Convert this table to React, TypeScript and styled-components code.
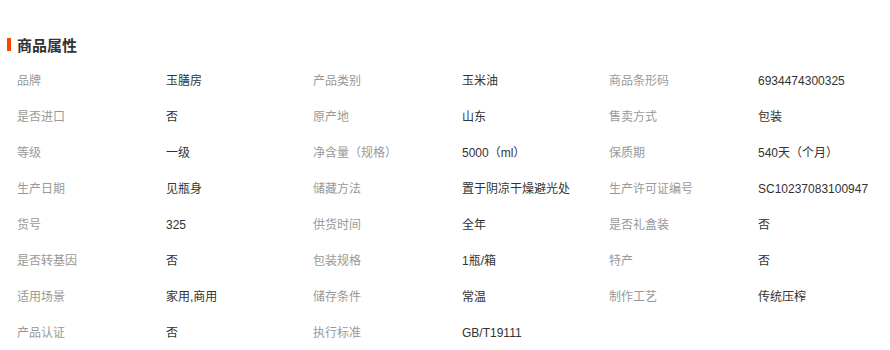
import React from 'react';
import styled, { createGlobalStyle } from 'styled-components';

const GlobalStyle = createGlobalStyle`
  body {
    margin: 0;
    background: #fff;
    font-family: "Liberation Sans", "Noto Sans CJK SC", sans-serif;
  }
`;

const Section = styled.section`
  width: 890px;
  padding-top: 29px;
`;

const Title = styled.h3`
  display: flex;
  align-items: center;
  gap: 6px;
  margin: 0 0 4px;
  padding-left: 7px;
  height: 30px;
  font-size: 15px;
  font-weight: bold;
  color: #333;

  &::before {
    content: '';
    width: 4px;
    height: 13px;
    background: #ff4400;
  }
`;

const Grid = styled.div`
  display: grid;
  grid-template-columns: 149px 147px 149px 147px 149px 1fr;
  grid-auto-rows: 36px;
  padding-left: 17px;
`;

const Cell = styled.div<{ $label?: boolean }>`
  font-size: 12px;
  line-height: 36px;
  color: ${(p) => (p.$label ? '#999' : '#333')};
  white-space: nowrap;
`;

const attrs: [string, string][] = [
  ['品牌', '玉膳房'],
  ['产品类别', '玉米油'],
  ['商品条形码', '6934474300325'],
  ['是否进口', '否'],
  ['原产地', '山东'],
  ['售卖方式', '包装'],
  ['等级', '一级'],
  ['净含量（规格）', '5000（ml）'],
  ['保质期', '540天（个月）'],
  ['生产日期', '见瓶身'],
  ['储藏方法', '置于阴凉干燥避光处'],
  ['生产许可证编号', 'SC10237083100947'],
  ['货号', '325'],
  ['供货时间', '全年'],
  ['是否礼盒装', '否'],
  ['是否转基因', '否'],
  ['包装规格', '1瓶/箱'],
  ['特产', '否'],
  ['适用场景', '家用,商用'],
  ['储存条件', '常温'],
  ['制作工艺', '传统压榨'],
  ['产品认证', '否'],
  ['执行标准', 'GB/T19111'],
];

export default function App() {
  return (
    <>
      <GlobalStyle />
      <Section>
        <Title>商品属性</Title>
        <Grid>
          {attrs.map(([k, v]) => (
            <React.Fragment key={k}>
              <Cell $label>{k}</Cell>
              <Cell>{v}</Cell>
            </React.Fragment>
          ))}
        </Grid>
      </Section>
    </>
  );
}
